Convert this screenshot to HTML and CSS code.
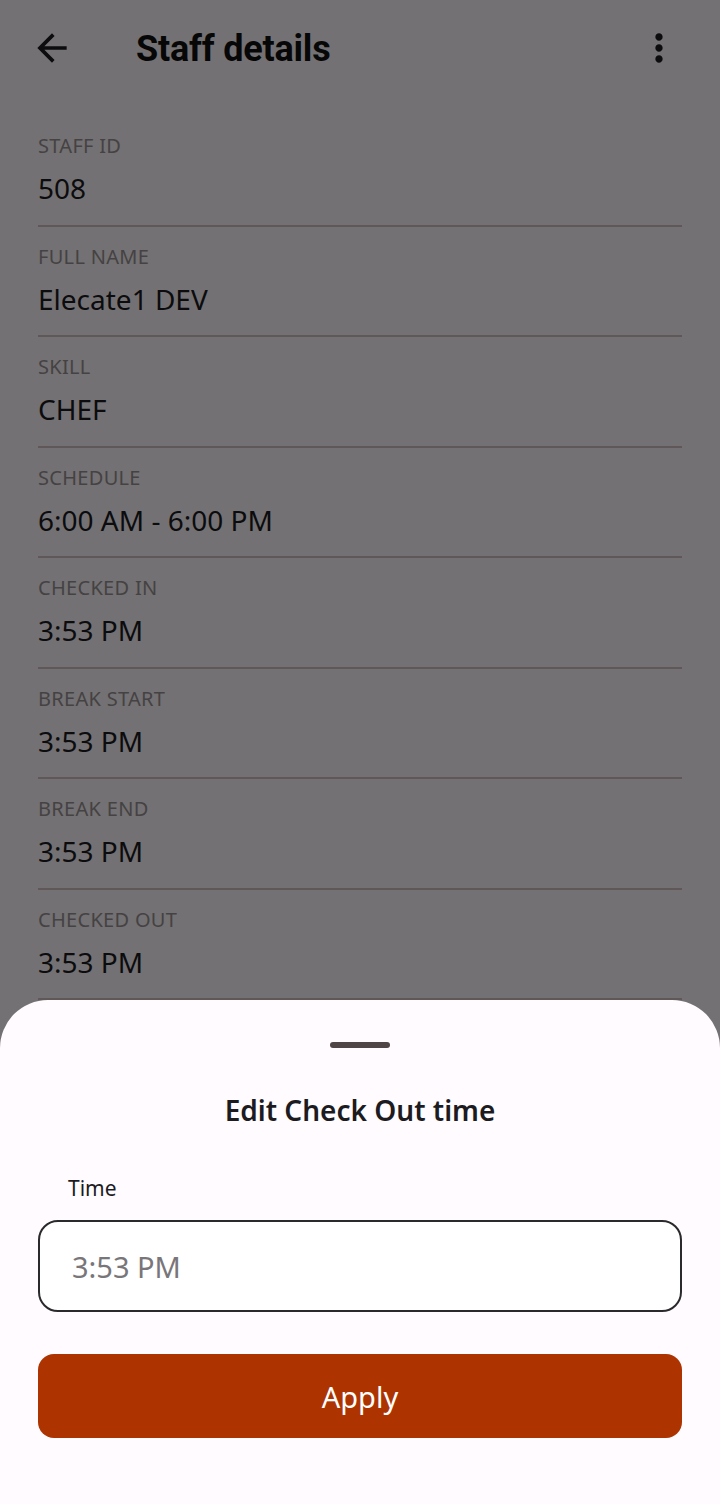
FILE: index.html
```html
<!DOCTYPE html>
<html lang="en">
<head>
  <meta charset="UTF-8">
  <title>Staff details</title>
  <link rel="stylesheet" href="styles.css">
</head>
<body>
  <div class="screen">

    <div class="appbar">
      <button class="icon-btn" aria-label="Back">
        <svg viewBox="0 0 24 24" width="44" height="44"><path d="M20 11H7.83l5.59-5.59L12 4l-8 8 8 8 1.41-1.41L7.83 13H20v-2z"/></svg>
      </button>
      <h1 class="title">Staff details</h1>
      <button class="icon-btn menu" aria-label="More">
        <svg viewBox="0 0 24 24" width="44" height="44"><path d="M12 8c1.1 0 2-.9 2-2s-.9-2-2-2-2 .9-2 2 .9 2 2 2zm0 2c-1.1 0-2 .9-2 2s.9 2 2 2 2-.9 2-2-.9-2-2-2zm0 6c-1.1 0-2 .9-2 2s.9 2 2 2 2-.9 2-2-.9-2-2-2z"/></svg>
      </button>
    </div>

    <div class="details">
      <div class="field">
        <div class="label">STAFF ID</div>
        <div class="value">508</div>
      </div>
      <div class="field">
        <div class="label">FULL NAME</div>
        <div class="value">Elecate1 DEV</div>
      </div>
      <div class="field">
        <div class="label">SKILL</div>
        <div class="value">CHEF</div>
      </div>
      <div class="field">
        <div class="label">SCHEDULE</div>
        <div class="value">6:00 AM - 6:00 PM</div>
      </div>
      <div class="field">
        <div class="label">CHECKED IN</div>
        <div class="value">3:53 PM</div>
      </div>
      <div class="field">
        <div class="label">BREAK START</div>
        <div class="value">3:53 PM</div>
      </div>
      <div class="field">
        <div class="label">BREAK END</div>
        <div class="value">3:53 PM</div>
      </div>
      <div class="field">
        <div class="label">CHECKED OUT</div>
        <div class="value">3:53 PM</div>
      </div>
    </div>

    <!-- modal scrim + bottom sheet -->
    <div class="scrim"></div>
    <div class="sheet">
      <div class="handle"></div>
      <h2 class="sheet-title">Edit Check Out time</h2>
      <label class="input-label" for="time">Time</label>
      <input class="time-input" id="time" type="text" placeholder="3:53 PM">
      <button class="apply">Apply</button>
    </div>

  </div>
</body>
</html>
```

FILE: styles.css
```css
body {
  margin: 0;
  font-family: "Noto Sans", sans-serif;
  background: #fffbfe;
}
.screen {
  position: relative;
  width: 720px;
  height: 1504px;
  overflow: hidden;
  background: #fffbfe;
}
.appbar {
  display: flex;
  align-items: center;
  height: 96px;
  padding: 0 16px 0 30px;
}
.icon-btn {
  display: flex;
  padding: 0;
  border: none;
  background: none;
  color: #1c1b1f;
}
.icon-btn svg {
  fill: currentColor;
}
.title {
  flex: 1;
  margin: 2px 0 0 62px;
  font-family: Roboto, sans-serif;
  font-size: 36px;
  font-weight: 700;
  letter-spacing: -0.2px;
  color: #111;
}
.menu {
  margin-right: 23px;
}
.details {
  padding: 20px 38px 0;
}
.field {
  padding: 18px 0 18.5px;
  border-bottom: 2px solid #d3c2c4;
}
.label {
  font-size: 20px;
  line-height: 24px;
  letter-spacing: 0.3px;
  color: #9a9295;
}
.value {
  margin-top: 12px;
  font-size: 28px;
  line-height: 36px;
  color: #1c1b1f;
}
.scrim {
  position: absolute;
  inset: 0;
  background: rgba(0, 0, 0, 0.55);
}
.sheet {
  position: absolute;
  left: 0;
  right: 0;
  top: 1000px;
  bottom: 0;
  display: flex;
  flex-direction: column;
  padding: 0 38px;
  background: #fffbfe;
  border-radius: 48px 48px 0 0;
}
.handle {
  align-self: center;
  width: 60px;
  height: 6px;
  margin-top: 42px;
  border-radius: 3px;
  background: #4f4446;
}
.sheet-title {
  margin: 42px 0 0;
  text-align: center;
  font-size: 28px;
  line-height: 40px;
  font-weight: 600;
  color: #1c1b1f;
}
.input-label {
  margin: 44px 0 0 30px;
  font-size: 21px;
  line-height: 28px;
  color: #1c1b1f;
}
.time-input {
  box-sizing: border-box;
  height: 92px;
  margin-top: 18px;
  padding: 0 32px;
  border: 2px solid #2a2a2c;
  border-radius: 20px;
  background: #fff;
  font-family: "Noto Sans", sans-serif;
  font-size: 29px;
}
.time-input::placeholder {
  color: #79767a;
}
.apply {
  height: 84px;
  margin-top: 42px;
  border: none;
  border-radius: 16px;
  background: #ad3400;
  color: #fff;
  font-family: "Noto Sans", sans-serif;
  font-size: 29px;
}
```
